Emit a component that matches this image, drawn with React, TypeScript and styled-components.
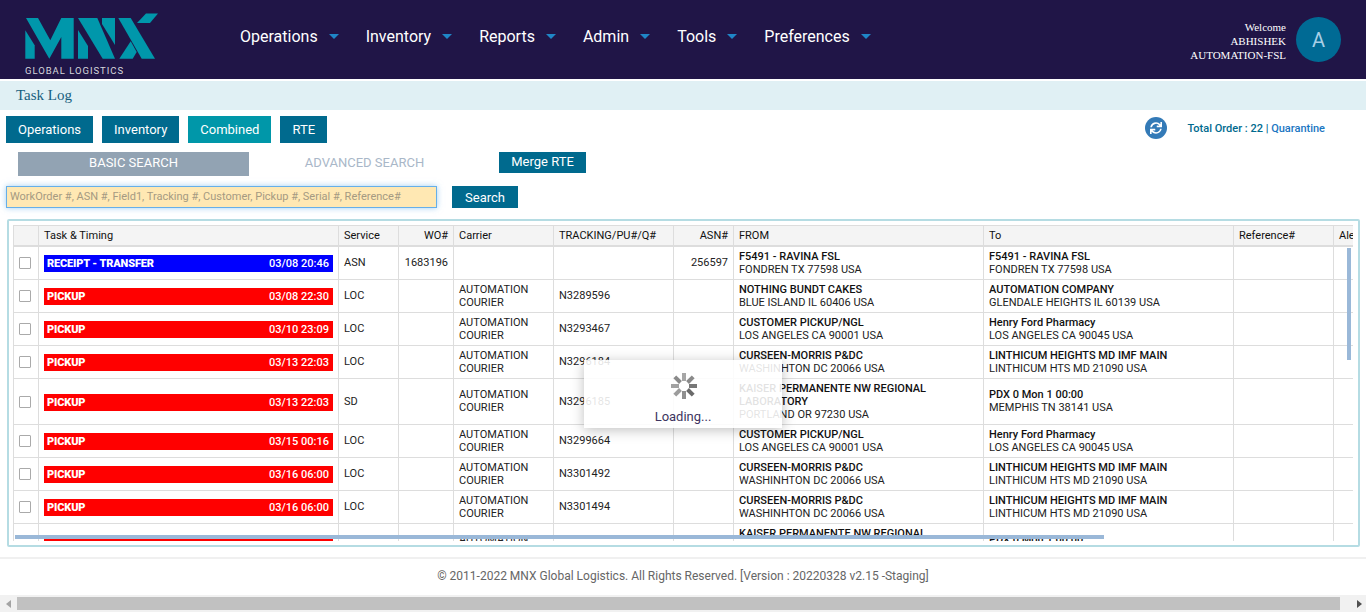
import React from 'react';
import styled, { createGlobalStyle } from 'styled-components';
import { FaSync } from 'react-icons/fa';

const GlobalStyle = createGlobalStyle`
  html, body {
    margin: 0;
    height: 612px;
    overflow: hidden;
    background: #fff;
    font-family: Roboto, 'Liberation Sans', sans-serif;
  }
`;

const Page = styled.div`
  display: flex;
  flex-direction: column;
  width: 1366px;
  height: 612px;
  overflow: hidden;
`;

const Header = styled.header`
  display: flex;
  align-items: center;
  flex: none;
  height: 79px;
  padding-right: 25px;
  background: #201547;
`;

const Logo = styled.div`
  position: relative;
  flex: none;
  width: 240px;
  height: 79px;
`;

const LogoMark = styled.svg`
  display: block;
`;

const LogoText = styled.span`
  position: absolute;
  left: 25px;
  top: 65px;
  color: #d5d5dc;
  font-size: 9.5px;
  line-height: 11px;
  letter-spacing: 0.97px;
  white-space: nowrap;
`;

const Nav = styled.nav`
  display: flex;
  flex: 1;
  align-items: center;
  gap: 27px;
  margin-bottom: 6px;
`;

const NavItem = styled.a`
  display: flex;
  align-items: center;
  gap: 11px;
  color: #fff;
  font-size: 16px;
  line-height: 20px;
`;

const Caret = styled.i`
  width: 0;
  height: 0;
  border-left: 5px solid transparent;
  border-right: 5px solid transparent;
  border-top: 5px solid #1f86c7;
`;

const UserText = styled.div`
  margin-top: 2px;
  color: #fff;
  font-family: 'Liberation Serif', serif;
  font-size: 11px;
  line-height: 14px;
  text-align: right;
`;

const Avatar = styled.div`
  display: flex;
  align-items: center;
  justify-content: center;
  width: 45px;
  height: 45px;
  margin-left: 10px;
  border-radius: 50%;
  background: #006a94;
  color: #a8cfe6;
  font-size: 20px;
`;

const TitleBar = styled.div`
  flex: none;
  height: 29px;
  margin-top: 2px;
  padding-left: 16px;
  background: #e0f0f4;
  color: #17607f;
  font-family: 'Liberation Serif', serif;
  font-size: 15px;
  line-height: 29px;
`;

const TabRow = styled.div`
  display: flex;
  align-items: center;
  gap: 9px;
  flex: none;
  height: 27px;
  margin-top: 6px;
  padding: 0 41px 0 6px;
`;

const Button = styled.button<{ $active?: boolean }>`
  height: 27px;
  padding: 0 12px;
  border: 0;
  background: ${(p) => (p.$active ? '#0097a9' : '#006a8e')};
  color: #fff;
  font-family: inherit;
  font-size: 13px;
`;

const Totals = styled.div`
  display: flex;
  align-items: center;
  margin-left: auto;
  margin-bottom: 3px;
  font-size: 11px;
  font-weight: 500;
  color: #006a8e;
`;

const Refresh = styled.span`
  display: flex;
  align-items: center;
  justify-content: center;
  width: 22px;
  height: 22px;
  margin-right: 20px;
  border-radius: 50%;
  background: #337ab7;
  color: #fff;
  font-size: 12px;
`;

const Quarantine = styled.span`
  color: #1a76c2;
`;

const SearchTabs = styled.div`
  display: flex;
  align-items: flex-start;
  flex: none;
  height: 24px;
  margin-top: 9px;
  padding-left: 18px;
`;

const SearchTab = styled.div<{ $active?: boolean }>`
  width: 231px;
  height: 24px;
  background: ${(p) => (p.$active ? '#92a3b3' : 'transparent')};
  color: ${(p) => (p.$active ? '#fff' : '#a9b7c8')};
  font-size: 13px;
  line-height: 22px;
  text-align: center;
`;

const MergeButton = styled(Button)`
  width: 87px;
  height: 21px;
  margin-left: 19px;
  padding: 0 0 2px;
`;

const SearchRow = styled.div`
  display: flex;
  gap: 15px;
  flex: none;
  height: 22px;
  margin-top: 10px;
  padding-left: 6px;
`;

const SearchInput = styled.div`
  box-sizing: border-box;
  width: 431px;
  height: 22px;
  padding-left: 3px;
  border: 1px solid #66afe9;
  background: #ffe8b3;
  box-shadow: 0 0 6px rgba(102, 175, 233, 0.6);
  color: #a59a82;
  font-size: 11px;
  line-height: 19px;
  white-space: nowrap;
`;

const SearchButton = styled(Button)`
  width: 66px;
  height: 22px;
  padding: 0;
`;

const Panel = styled.section`
  position: relative;
  box-sizing: border-box;
  flex: none;
  width: 1353px;
  height: 328px;
  margin: 11px 0 0 7px;
  padding: 4px 5px 4px 4px;
  border: 2px solid #b5dce3;
  border-radius: 2px;
`;

const TableClip = styled.div`
  width: 1340px;
  height: 316px;
  overflow: hidden;
`;

const Table = styled.table`
  width: 1400px;
  table-layout: fixed;
  border-collapse: collapse;
  color: #222;
  font-size: 11px;
  line-height: 13px;
`;

const Th = styled.th<{ $right?: boolean }>`
  box-sizing: border-box;
  height: 20px;
  padding: 0 5px;
  border: 1px solid #ddd;
  border-bottom-width: 2px;
  background: #f4f4f4;
  color: #111;
  font-weight: 400;
  text-align: ${(p) => (p.$right ? 'right' : 'left')};
  white-space: nowrap;
  overflow: hidden;
`;

const Td = styled.td<{ $right?: boolean }>`
  padding: 3px 5px;
  border: 1px solid #ddd;
  text-align: ${(p) => (p.$right ? 'right' : 'left')};
  vertical-align: middle;
`;

const CheckCell = styled(Td)`
  padding: 0 2px 0 0;
  text-align: center;
`;

const Check = styled.span`
  display: inline-block;
  box-sizing: border-box;
  width: 12px;
  height: 12px;
  border: 1px solid #aaa;
  border-radius: 1px;
  background: #fff;
  vertical-align: middle;
`;

const TaskBar = styled.div<{ $color: string }>`
  display: flex;
  align-items: center;
  justify-content: space-between;
  height: 17px;
  margin-top: 2px;
  padding: 0 4px 0 3px;
  background: ${(p) => p.$color};
  color: #fff;
`;

const TaskName = styled.b`
  font-weight: 900;
  letter-spacing: -0.15px;
`;

const TaskTime = styled.span`
  font-weight: 500;
`;

const Place = styled.b`
  display: block;
  font-weight: 500;
  color: #111;
`;

const ScrollY = styled.i`
  position: absolute;
  left: 1338px;
  top: 27px;
  width: 4px;
  height: 112px;
  background: #9ab8d8;
`;

const ScrollX = styled.i`
  position: absolute;
  left: 6px;
  top: 314px;
  width: 1089px;
  height: 4px;
  background: #9ab8d8;
`;

const Loading = styled.div`
  position: absolute;
  left: 575px;
  top: 139px;
  display: flex;
  flex-direction: column;
  align-items: center;
  box-sizing: border-box;
  width: 198px;
  height: 68px;
  padding: 13px 0 0 2px;
  background: rgba(255, 255, 255, 0.88);
  box-shadow: 0 2px 12px rgba(0, 0, 0, 0.25);
  color: #3d3560;
  font-size: 13px;
`;

const LoadingLabel = styled.span`
  margin-top: 11px;
  margin-right: 2px;
  line-height: 14px;
`;

const Footer = styled.footer`
  flex: none;
  height: 36px;
  margin-top: 10px;
  border-top: 2px solid #f0f0f0;
  color: #666;
  font-size: 12px;
  line-height: 35px;
  text-align: center;
`;

const PageScroll = styled.div`
  display: flex;
  align-items: center;
  flex: none;
  height: 17px;
  margin-top: auto;
  background: #f1f1f1;
`;

const ScrollThumb = styled.div`
  flex: 1;
  height: 13px;
  background: #c1c1c1;
`;

const ScrollArrow = styled.i<{ $right?: boolean }>`
  flex: none;
  width: 0;
  height: 0;
  margin: ${(p) => (p.$right ? '0 4px 0 17px' : '0 6px 0 6px')};
  border-top: 4px solid transparent;
  border-bottom: 4px solid transparent;
  border-left: ${(p) => (p.$right ? '5px solid #505050' : '0')};
  border-right: ${(p) => (p.$right ? '0' : '5px solid #a3a3a3')};
`;

const columns = [
  { label: '', width: 25 },
  { label: 'Task & Timing', width: 300 },
  { label: 'Service', width: 60 },
  { label: 'WO#', width: 55, right: true },
  { label: 'Carrier', width: 100 },
  { label: 'TRACKING/PU#/Q#', width: 120 },
  { label: 'ASN#', width: 60, right: true },
  { label: 'FROM', width: 250 },
  { label: 'To', width: 250 },
  { label: 'Reference#', width: 100 },
  { label: 'Alert', width: 80 },
];

const navItems = ['Operations', 'Inventory', 'Reports', 'Admin', 'Tools', 'Preferences'];

const ravina = ['F5491 - RAVINA FSL', 'FONDREN TX 77598 USA'];
const curseen = ['CURSEEN-MORRIS P&DC', 'WASHINHTON DC 20066 USA'];
const linthicum = ['LINTHICUM HEIGHTS MD IMF MAIN', 'LINTHICUM HTS MD 21090 USA'];
const kaiser = ['KAISER PERMANENTE NW REGIONAL LABORATORY', 'PORTLAND OR 97230 USA'];
const pdx = ['PDX 0 Mon 1 00:00', 'MEMPHIS TN 38141 USA'];
const customer = ['CUSTOMER PICKUP/NGL', 'LOS ANGELES CA 90001 USA'];
const henry = ['Henry Ford Pharmacy', 'LOS ANGELES CA 90045 USA'];

const rows = [
  { task: 'RECEIPT - TRANSFER', color: '#0000ff', time: '03/08 20:46', service: 'ASN', wo: '1683196', tracking: '', asn: '256597', from: ravina, to: ravina },
  { task: 'PICKUP', color: '#ff0000', time: '03/08 22:30', service: 'LOC', tracking: 'N3289596', from: ['NOTHING BUNDT CAKES', 'BLUE ISLAND IL 60406 USA'], to: ['AUTOMATION COMPANY', 'GLENDALE HEIGHTS IL 60139 USA'] },
  { task: 'PICKUP', color: '#ff0000', time: '03/10 23:09', service: 'LOC', tracking: 'N3293467', from: customer, to: henry },
  { task: 'PICKUP', color: '#ff0000', time: '03/13 22:03', service: 'LOC', tracking: 'N3296184', from: curseen, to: linthicum },
  { task: 'PICKUP', color: '#ff0000', time: '03/13 22:03', service: 'SD', tracking: 'N3296185', from: kaiser, to: pdx },
  { task: 'PICKUP', color: '#ff0000', time: '03/15 00:16', service: 'LOC', tracking: 'N3299664', from: customer, to: henry },
  { task: 'PICKUP', color: '#ff0000', time: '03/16 06:00', service: 'LOC', tracking: 'N3301492', from: curseen, to: linthicum },
  { task: 'PICKUP', color: '#ff0000', time: '03/16 06:00', service: 'LOC', tracking: 'N3301494', from: curseen, to: linthicum },
  { task: 'PICKUP', color: '#ff0000', time: '03/16 06:00', service: 'SD', tracking: 'N3301495', from: kaiser, to: pdx },
];

const spinnerShades = ['#a6a6a6', '#8a8a8a', '#777', '#6a6a6a', '#8f8f8f', '#9c9c9c', '#a2a2a2', '#8a8a8a'];

const App: React.FC = () => {
  return (
    <Page>
      <GlobalStyle />
      <Header>
        <Logo>
          <LogoMark width="240" height="64" viewBox="0 0 240 64">
            <g fill="#0097ab">
              <polygon points="25.3,30.3 34.7,45.3 34.7,58.7 25.3,58.7" />
              <polygon points="26,18 38,18 50.3,40.3 61.3,18 73.7,18 73.7,58.7 61.3,58.7 61.3,37 49.3,58.7" />
              <polygon points="78,30 88,46 88,58.7 78,58.7" />
              <polygon points="78,18 97.3,18 115,58.7 102.7,58.7" />
              <polygon points="102,18 115,18 115,45 102,24" />
              <polygon points="118.3,18 130.7,18 155,58.7 141.7,58.7" />
              <polygon points="119.3,58.7 130.7,41.3 136.7,52 132.7,58.7" />
              <polygon points="137,23 146,13.5 158,13.5 150,23" />
            </g>
          </LogoMark>
          <LogoText>GLOBAL LOGISTICS</LogoText>
        </Logo>
        <Nav>
          {navItems.map((item) => (
            <NavItem key={item}>
              {item}
              <Caret />
            </NavItem>
          ))}
        </Nav>
        <UserText>
          Welcome
          <br />
          ABHISHEK
          <br />
          AUTOMATION-FSL
        </UserText>
        <Avatar>A</Avatar>
      </Header>

      <TitleBar>Task Log</TitleBar>

      <TabRow>
        <Button>Operations</Button>
        <Button>Inventory</Button>
        <Button $active>Combined</Button>
        <Button>RTE</Button>
        <Totals>
          <Refresh>
            <FaSync />
          </Refresh>
          Total Order : 22&nbsp;|&nbsp;<Quarantine>Quarantine</Quarantine>
        </Totals>
      </TabRow>

      <SearchTabs>
        <SearchTab $active>BASIC SEARCH</SearchTab>
        <SearchTab>ADVANCED SEARCH</SearchTab>
        <MergeButton>Merge RTE</MergeButton>
      </SearchTabs>

      <SearchRow>
        <SearchInput>WorkOrder #, ASN #, Field1, Tracking #, Customer, Pickup #, Serial #, Reference#</SearchInput>
        <SearchButton>Search</SearchButton>
      </SearchRow>

      <Panel>
        <TableClip>
          <Table>
            <colgroup>
              {columns.map((c, i) => (
                <col key={i} width={c.width} />
              ))}
            </colgroup>
            <thead>
              <tr>
                {columns.map((c, i) => (
                  <Th key={i} $right={c.right}>
                    {c.label}
                  </Th>
                ))}
              </tr>
            </thead>
            <tbody>
              {rows.map((r, i) => (
                <tr key={i}>
                  <CheckCell>
                    <Check />
                  </CheckCell>
                  <Td>
                    <TaskBar $color={r.color}>
                      <TaskName>{r.task}</TaskName>
                      <TaskTime>{r.time}</TaskTime>
                    </TaskBar>
                  </Td>
                  <Td>{r.service}</Td>
                  <Td $right>{r.wo}</Td>
                  <Td>{i > 0 ? 'AUTOMATION COURIER' : ''}</Td>
                  <Td>{r.tracking}</Td>
                  <Td $right>{r.asn}</Td>
                  <Td>
                    <Place>{r.from[0]}</Place>
                    {r.from[1]}
                  </Td>
                  <Td>
                    <Place>{r.to[0]}</Place>
                    {r.to[1]}
                  </Td>
                  <Td />
                  <Td />
                </tr>
              ))}
            </tbody>
          </Table>
        </TableClip>
        <ScrollY />
        <ScrollX />
        <Loading>
          <svg width="26" height="26" viewBox="0 0 26 26">
            {spinnerShades.map((shade, i) => (
              <rect
                key={i}
                x="11"
                y="0"
                width="4"
                height="8"
                fill={shade}
                transform={`rotate(${i * 45} 13 13)`}
              />
            ))}
          </svg>
          <LoadingLabel>Loading...</LoadingLabel>
        </Loading>
      </Panel>

      <Footer>© 2011-2022 MNX Global Logistics. All Rights Reserved. [Version : 20220328 v2.15 -Staging]</Footer>

      <PageScroll>
        <ScrollArrow />
        <ScrollThumb />
        <ScrollArrow $right />
      </PageScroll>
    </Page>
  );
};

export default App;
